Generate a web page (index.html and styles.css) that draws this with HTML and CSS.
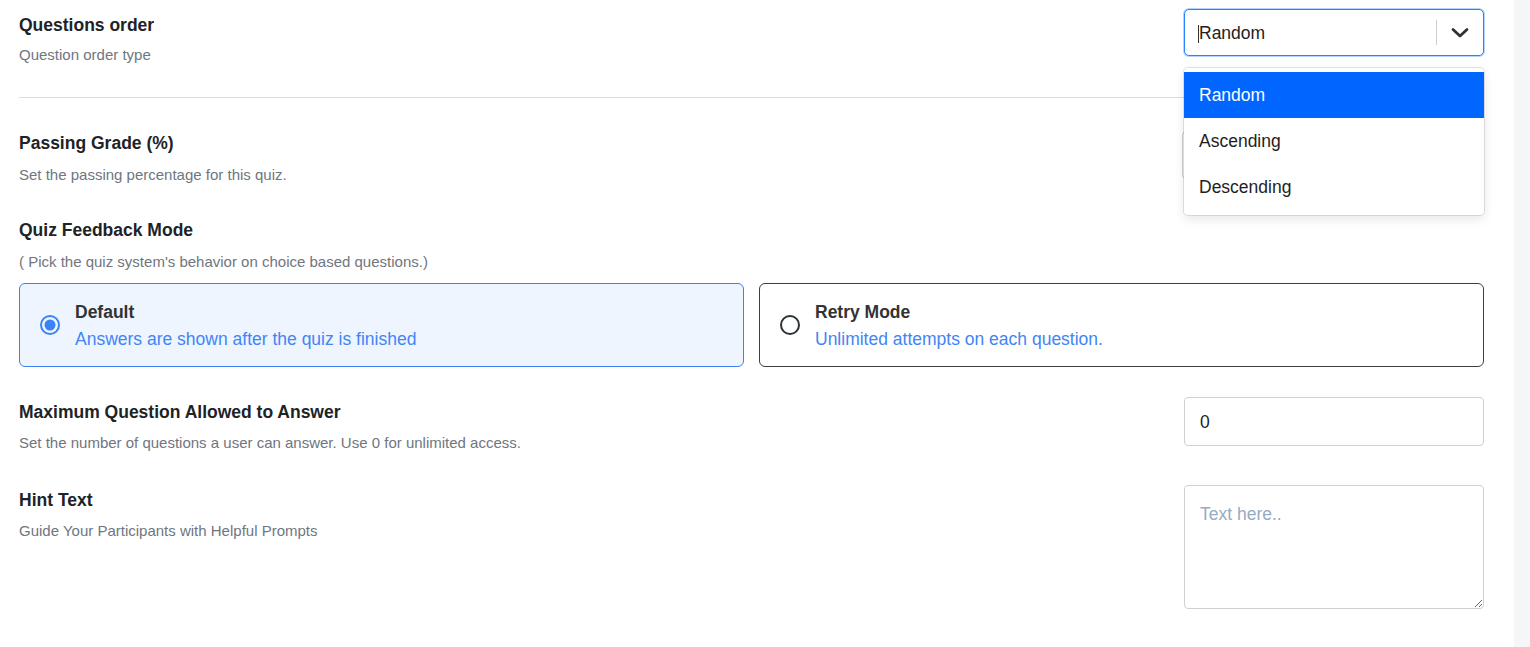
FILE: index.html
```html
<!DOCTYPE html>
<html lang="en">
  <head>
    <meta charset="UTF-8" />
    <meta name="viewport" content="width=device-width, initial-scale=1.0" />
    <title>Quiz Settings</title>
    <link rel="stylesheet" href="styles.css">
  </head>
  <body>
    <div class="layout">
      <main class="panel">
        <!-- Questions order -->
        <div class="setting setting-first">
          <div class="setting-info">
            <h3 class="setting-title">Questions order</h3>
            <p class="setting-desc">Question order type</p>
          </div>
          <div class="select">
            <div class="select-control">
              <div class="select-value"><span class="caret"></span>Random</div>
              <span class="select-sep"></span>
              <div class="select-indicator">
                <svg width="18" height="12" viewBox="0 0 18 12">
                  <polyline points="2,2.5 9,9 16,2.5" fill="none" stroke="#333" stroke-width="2.8" stroke-linecap="round" stroke-linejoin="round" />
                </svg>
              </div>
            </div>
            <ul class="select-menu">
              <li class="select-option is-selected">Random</li>
              <li class="select-option">Ascending</li>
              <li class="select-option">Descending</li>
            </ul>
          </div>
        </div>

        <hr class="divider" />

        <!-- Passing grade -->
        <div class="setting setting-grade">
          <div class="setting-info info-flush">
            <h3 class="setting-title">Passing Grade (%)</h3>
            <p class="setting-desc">Set the passing percentage for this quiz.</p>
          </div>
          <input class="field field-grade" type="text" value="80" />
        </div>

        <!-- Feedback mode -->
        <div class="feedback">
          <h3 class="setting-title">Quiz Feedback Mode</h3>
          <p class="setting-desc">( Pick the quiz system's behavior on choice based questions.)</p>
          <div class="mode-grid">
            <label class="mode-card is-active">
              <svg class="radio" width="20" height="20" viewBox="0 0 20 20">
                <circle cx="10" cy="10" r="9" fill="none" stroke="#3b82f6" stroke-width="2" />
                <circle cx="10" cy="10" r="5.5" fill="#3b82f6" />
              </svg>
              <span class="mode-text">
                <span class="mode-title">Default</span>
                <span class="mode-desc">Answers are shown after the quiz is finished</span>
              </span>
            </label>
            <label class="mode-card">
              <svg class="radio" width="20" height="20" viewBox="0 0 20 20">
                <circle cx="10" cy="10" r="9" fill="none" stroke="#2c3338" stroke-width="2" />
              </svg>
              <span class="mode-text">
                <span class="mode-title">Retry Mode</span>
                <span class="mode-desc">Unlimited attempts on each question.</span>
              </span>
            </label>
          </div>
        </div>

        <!-- Max questions -->
        <div class="setting setting-max">
          <div class="setting-info info-max">
            <h3 class="setting-title">Maximum Question Allowed to Answer</h3>
            <p class="setting-desc">Set the number of questions a user can answer. Use 0 for unlimited access.</p>
          </div>
          <input class="field field-number" type="text" value="0" />
        </div>

        <!-- Hint text -->
        <div class="setting setting-hint">
          <div class="setting-info info-hint">
            <h3 class="setting-title">Hint Text</h3>
            <p class="setting-desc">Guide Your Participants with Helpful Prompts</p>
          </div>
          <textarea class="field field-area" placeholder="Text here.."></textarea>
        </div>
      </main>
      <div class="rail"></div>
    </div>
  </body>
</html>
```

FILE: styles.css
```css
:root {
  --text-dark: #1d2327;
  --text-muted: #6f7680;
  --blue: #3b82f6;
  --field-border: #cdd0d4;
}

* {
  box-sizing: border-box;
}

body {
  margin: 0;
  font-family: "Liberation Sans", Arial, sans-serif;
  background-color: #ffffff;
  color: var(--text-dark);
}

.layout {
  display: flex;
  height: 647px;
  overflow: hidden;
}

.panel {
  flex: 1;
  padding: 9px 30px 0 19px;
  background-color: #ffffff;
}

.rail {
  width: 16px;
  background-color: #f5f6f8;
}

/* Setting rows: info on the left, control on the right */
.setting {
  display: flex;
  justify-content: space-between;
  align-items: flex-start;
}

.setting-info {
  padding-top: 6px;
}

.info-flush {
  padding-top: 2px;
}

.info-max {
  padding-top: 5px;
}

.info-hint {
  padding-top: 5px;
}

.setting-title {
  margin: 0;
  font-size: 17.5px;
  line-height: 20px;
  font-weight: 700;
  color: var(--text-dark);
}

.setting-desc {
  margin: 10px 0 0;
  font-size: 15px;
  line-height: 20px;
  color: var(--text-muted);
}

.info-flush .setting-desc,
.feedback .setting-desc {
  margin-top: 12px;
}

.info-max .setting-desc,
.info-hint .setting-desc {
  margin-top: 11px;
}

.divider {
  margin: 32px 0 0;
  border: 0;
  border-top: 1px solid #dcdcde;
}

.setting-grade {
  margin-top: 33px;
}

.feedback {
  margin-top: 35px;
}

.setting-max {
  margin-top: 30px;
}

.setting-hint {
  margin-top: 32px;
}

/* Inputs */
.field {
  width: 300px;
  height: 49px;
  padding: 0 15px;
  border: 1px solid var(--field-border);
  border-radius: 4px;
  font-family: inherit;
  font-size: 17.5px;
  color: #1e1e1e;
  background-color: #ffffff;
  outline: none;
}

.field-number {
  padding-top: 2px;
}

.field-grade {
  width: 302px;
  height: 48px;
}

.field-area {
  height: 124px;
  padding: 18px 15px 14px;
  line-height: 20px;
  resize: vertical;
}

.field-area::placeholder {
  color: #98abc2;
}

/* Custom select with open menu */
.select {
  position: relative;
  width: 300px;
}

.select-control {
  display: flex;
  align-items: center;
  height: 47px;
  border: 1px solid #2684ff;
  box-shadow: 0 0 0 1px rgba(38, 132, 255, 0.35);
  border-radius: 5px;
  background-color: #ffffff;
}

.select-value {
  flex: 1;
  display: flex;
  align-items: center;
  padding: 2px 0 0 13px;
  font-size: 17.5px;
  color: #222;
}

.caret {
  width: 1px;
  height: 18px;
  background-color: #333;
}

.select-sep {
  align-self: stretch;
  width: 1px;
  margin: 10px 0;
  background-color: #cccccc;
}

.select-indicator {
  width: 46px;
  display: flex;
  justify-content: center;
  align-items: center;
}

.select-indicator svg {
  display: block;
}

.select-menu {
  position: absolute;
  top: 59px;
  left: 0;
  right: 0;
  z-index: 5;
  margin: 0;
  padding: 4px 0 5px;
  list-style: none;
  background-color: #ffffff;
  border-radius: 4px;
  box-shadow: 0 0 0 1px rgba(0, 0, 0, 0.1), 0 4px 11px rgba(0, 0, 0, 0.1);
}

.select-option {
  height: 46px;
  display: flex;
  align-items: center;
  padding-left: 15px;
  font-size: 17.5px;
  color: #1e1e1e;
}

.select-option.is-selected {
  background-color: #0066ff;
  color: #ffffff;
}

/* Feedback mode cards */
.mode-grid {
  display: grid;
  grid-template-columns: 1fr 1fr;
  gap: 15px;
  margin-top: 11px;
}

.mode-card {
  display: flex;
  align-items: center;
  gap: 15px;
  height: 84px;
  padding-left: 20px;
  border: 1px solid #3a3f44;
  border-radius: 6px;
  background-color: #ffffff;
}

.mode-card.is-active {
  border-color: var(--blue);
  background-color: #eef5ff;
}

.radio {
  flex-shrink: 0;
}

.mode-text {
  display: flex;
  flex-direction: column;
  gap: 7px;
}

.mode-title {
  font-size: 17.5px;
  line-height: 20px;
  font-weight: 700;
  color: #333333;
}

.mode-desc {
  font-size: 17.5px;
  line-height: 20px;
  color: #4285f4;
}
```
